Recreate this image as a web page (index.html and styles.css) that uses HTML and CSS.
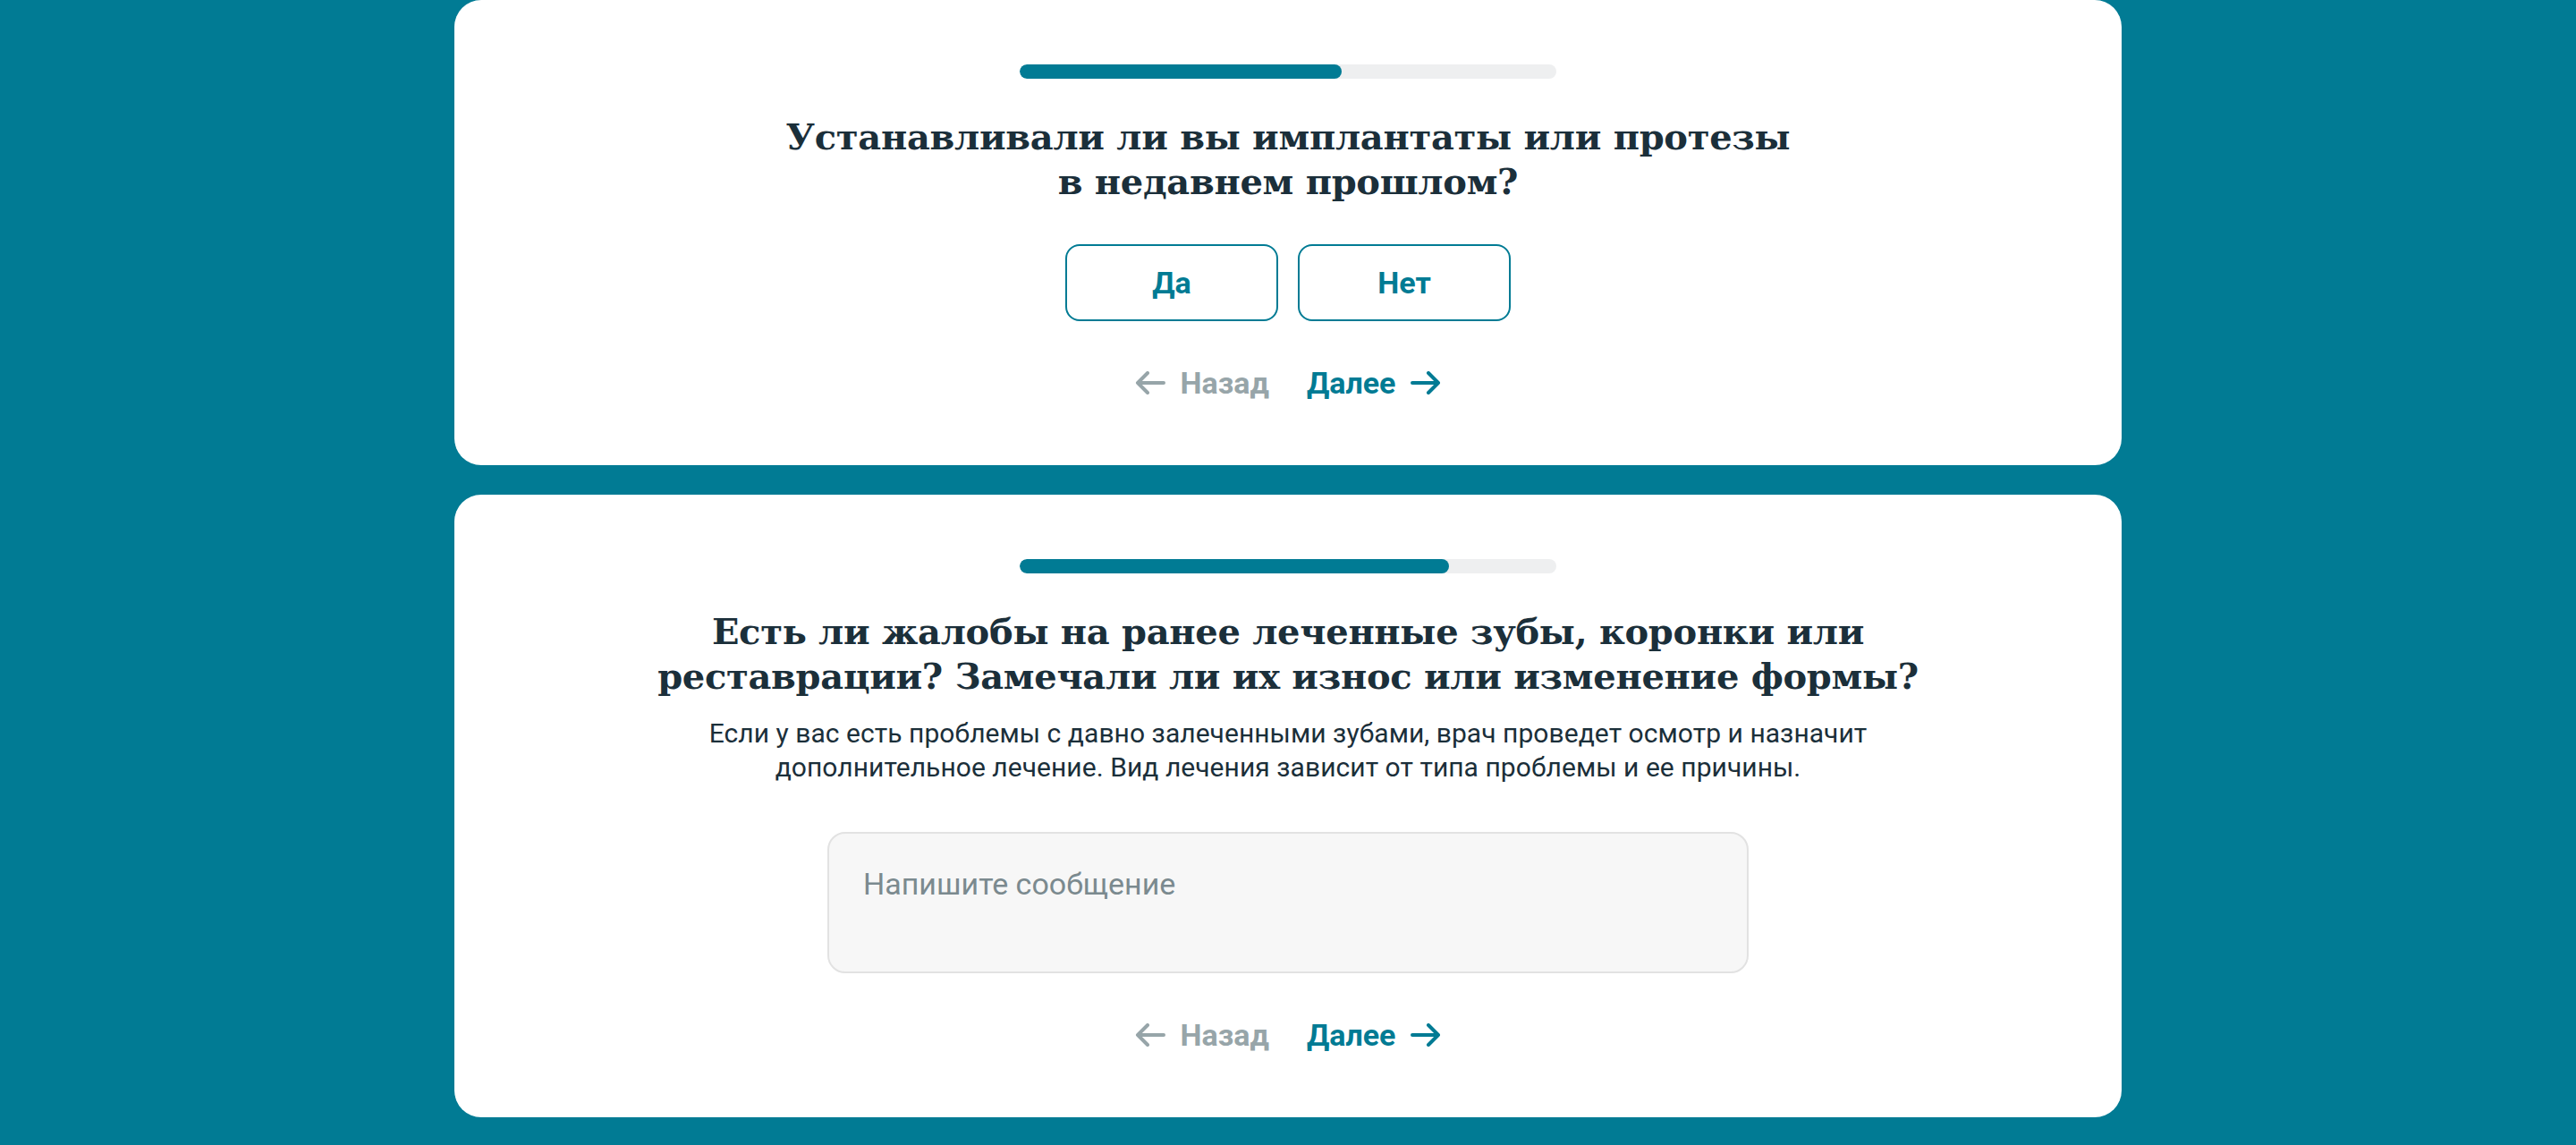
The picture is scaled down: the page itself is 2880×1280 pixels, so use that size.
FILE: index.html
```html
<!DOCTYPE html>
<html lang="ru">
<head>
    <meta charset="UTF-8">
    <meta name="viewport" content="width=device-width, initial-scale=1.0">
    <title>Анкета пациента</title>
    <link rel="stylesheet" href="styles.css">
</head>
<body>
    <div class="page">
        <section class="card">
            <div class="progress"><div class="progress-fill" style="width: 60%"></div></div>
            <h2 class="question">Устанавливали ли вы имплантаты или протезы<br>в недавнем прошлом?</h2>
            <div class="choices">
                <button class="choice">Да</button>
                <button class="choice">Нет</button>
            </div>
            <nav class="steps">
                <a href="#" class="step step-back">
                    <svg width="34" height="26" viewBox="0 0 34 26"><path d="M32 13H3M14 2L3 13l11 11" fill="none" stroke="currentColor" stroke-width="4" stroke-linecap="round" stroke-linejoin="round"/></svg>
                    Назад
                </a>
                <a href="#" class="step step-next">
                    Далее
                    <svg width="34" height="26" viewBox="0 0 34 26"><path d="M2 13h29M20 2l11 11-11 11" fill="none" stroke="currentColor" stroke-width="4" stroke-linecap="round" stroke-linejoin="round"/></svg>
                </a>
            </nav>
        </section>

        <section class="card">
            <div class="progress"><div class="progress-fill" style="width: 80%"></div></div>
            <h2 class="question">Есть ли жалобы на ранее леченные зубы, коронки или<br>реставрации? Замечали ли их износ или изменение формы?</h2>
            <p class="hint">Если у вас есть проблемы с давно залеченными зубами, врач проведет осмотр и назначит<br>дополнительное лечение. Вид лечения зависит от типа проблемы и ее причины.</p>
            <textarea class="message" placeholder="Напишите сообщение"></textarea>
            <nav class="steps">
                <a href="#" class="step step-back">
                    <svg width="34" height="26" viewBox="0 0 34 26"><path d="M32 13H3M14 2L3 13l11 11" fill="none" stroke="currentColor" stroke-width="4" stroke-linecap="round" stroke-linejoin="round"/></svg>
                    Назад
                </a>
                <a href="#" class="step step-next">
                    Далее
                    <svg width="34" height="26" viewBox="0 0 34 26"><path d="M2 13h29M20 2l11 11-11 11" fill="none" stroke="currentColor" stroke-width="4" stroke-linecap="round" stroke-linejoin="round"/></svg>
                </a>
            </nav>
        </section>
    </div>
</body>
</html>
```

FILE: styles.css
```css
body {
    margin: 0;
    padding: 0;
    background-color: #017b94;
    font-family: Roboto, "Liberation Sans", sans-serif;
    color: #1b2f3a;
}

.page {
    width: 1864px;
    margin: 0 auto;
    padding-bottom: 32px;
    display: flex;
    flex-direction: column;
    gap: 33px;
}

.card {
    background-color: white;
    border-radius: 30px;
    padding: 72px 0;
    display: flex;
    flex-direction: column;
    align-items: center;
}

.progress {
    width: 600px;
    height: 16px;
    border-radius: 8px;
    background-color: #eeeff0;
    overflow: hidden;
}

.progress-fill {
    height: 100%;
    border-radius: 8px;
    background-color: #017b94;
}

.question {
    margin: 40px 0 0;
    font-family: "DejaVu Serif", "Liberation Serif", serif;
    font-size: 40px;
    font-weight: bold;
    letter-spacing: -0.3px;
    line-height: 50px;
    text-align: center;
    color: #1b2f3a;
}

.hint {
    margin: 20px 0 0;
    font-size: 30px;
    letter-spacing: 0.05px;
    line-height: 38px;
    text-align: center;
}

.choices {
    display: flex;
    gap: 22px;
    margin-top: 45px;
}

.choice {
    width: 238px;
    height: 86px;
    background-color: white;
    border: 2px solid #017b94;
    border-radius: 16px;
    color: #017b94;
    font-family: Roboto, sans-serif;
    font-size: 34px;
    font-weight: bold;
    cursor: pointer;
}

.message {
    box-sizing: border-box;
    width: 1030px;
    height: 158px;
    margin-top: 53px;
    padding: 36px 38px;
    background-color: #f7f7f7;
    border: 2px solid #e2e2e2;
    border-radius: 20px;
    font-family: Roboto, sans-serif;
    font-size: 34px;
    line-height: 40px;
    color: #1b2f3a;
    resize: none;
}

.message::placeholder {
    color: #7b8a8f;
}

.steps {
    display: flex;
    gap: 42px;
    margin-top: 49px;
}

.step {
    display: flex;
    align-items: center;
    gap: 17px;
    font-size: 34px;
    font-weight: bold;
    line-height: 40px;
    text-decoration: none;
}

.step-back {
    color: #97a5a9;
}

.step-next {
    color: #017b94;
}
```
